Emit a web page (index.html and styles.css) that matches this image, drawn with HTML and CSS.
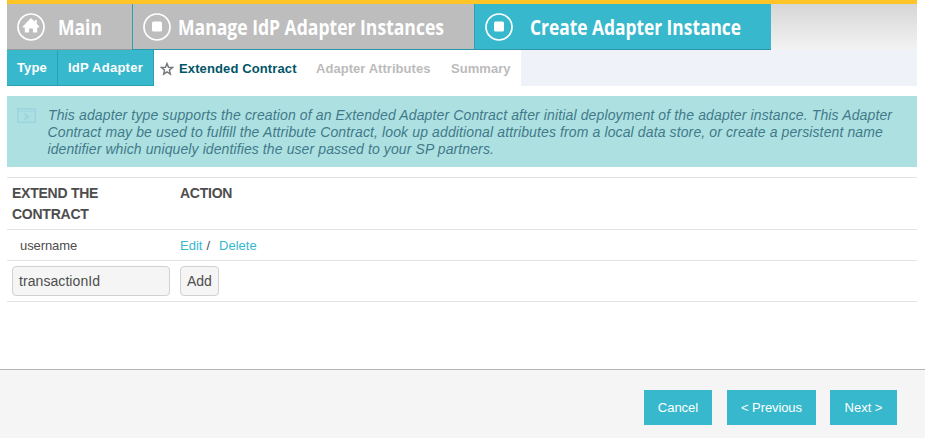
FILE: index.html
```
<!DOCTYPE html>
<html lang="en">
<head>
<meta charset="utf-8">
<title>Create Adapter Instance</title>
<link rel="stylesheet" href="styles.css">
</head>
<body>
<div class="page">
  <header class="crumbs">
    <div class="crumb crumb-main">
      <svg class="ring" viewBox="0 0 28 28"><circle cx="14" cy="14" r="13"/><path d="M14 5l3.8 3.8V7h2v3.8l2.4 2.7v1.1h-2V19.5h-4.3V15.5h-3.8V19.5H7.8v-4.9h-2v-1.1z"/></svg>
      <svg class="title" width="46" height="32"><text x="0" y="22.5" textLength="44" lengthAdjust="spacingAndGlyphs">Main</text></svg>
    </div>
    <div class="crumb crumb-manage">
      <svg class="ring" viewBox="0 0 28 28"><circle cx="14" cy="14" r="13"/><rect x="9" y="8.5" width="10" height="10" rx="1.5"/></svg>
      <svg class="title" width="270" height="32"><text x="0" y="22.5" textLength="266" lengthAdjust="spacingAndGlyphs">Manage IdP Adapter Instances</text></svg>
    </div>
    <div class="crumb crumb-create">
      <svg class="ring" viewBox="0 0 28 28"><circle cx="14" cy="14" r="13"/><rect x="9" y="8.5" width="10" height="10" rx="1.5"/></svg>
      <svg class="title" width="214" height="32"><text x="0" y="22.5" textLength="211" lengthAdjust="spacingAndGlyphs">Create Adapter Instance</text></svg>
    </div>
  </header>
  <nav class="tabs">
    <div class="tab tab-type">Type</div>
    <div class="tab tab-idp">IdP Adapter</div>
    <div class="steps">
      <svg class="star" viewBox="0 0 14 14"><path d="M7 1.5l1.5 3.8 4 .2-3.1 2.6 1 4L7 9.9l-3.4 2.2 1-4L1.5 5.5l4-.2z"/></svg>
      <span class="step current">Extended Contract</span>
      <span class="step attrs">Adapter Attributes</span>
      <span class="step summary">Summary</span>
    </div>
  </nav>
  <section class="notice">
    <svg class="notice-icon" viewBox="0 0 19 15"><path class="frame" d="M.8.8h17.4v13.4H.8z"/><path class="bar" d="M1 3.2h17"/><path class="chevron" d="M7 5.5l4.2 3.2L7 12"/></svg>
    <p><span class="l1">This adapter type supports the creation of an Extended Adapter Contract after initial deployment of the adapter instance. This Adapter</span><br><span class="l2">Contract may be used to fulfill the Attribute Contract, look up additional attributes from a local data store, or create a persistent name</span><br><span class="l3">identifier which uniquely identifies the user passed to your SP partners.</span></p>
  </section>
  <section class="grid">
    <div class="row head"><div class="c1">EXTEND THE<br>CONTRACT</div><div>ACTION</div></div>
    <div class="row data"><div class="c1">username</div><div class="links"><a>Edit</a><span>/</span><a>Delete</a></div></div>
    <div class="row entry"><div class="c1"><div class="field">transactionId</div></div><div class="add">Add</div></div>
  </section>
</div>
<footer class="footer">
  <div class="btn cancel">Cancel</div>
  <div class="btn prev">&lt; Previous</div>
  <div class="btn next">Next &gt;</div>
</footer>
</body>
</html>
```
FILE: styles.css
```
* { box-sizing: border-box; }
body { margin: 0; width: 925px; height: 438px; overflow: hidden; display: flex; flex-direction: column; background: #fff; color: #4d4d4d; font: 13px/16px "Liberation Sans", Arial, sans-serif; }
.page { width: 910px; height: 369px; margin-left: 7px; }
.crumbs { display: flex; height: 50px; border-top: 4px solid #ffc425; background: linear-gradient(#d6d6d6, #f3f3f4); }
.crumb { display: flex; align-items: flex-start; padding: 9px 0 0 10px; background: #bdbdbd; border-bottom: 1px solid #2996ab; }
.crumb-main { width: 125px; border-bottom-color: #999; }
.crumb-manage { width: 342px; border-left: 1px solid #2ba0b5; }
.crumb-create { width: 297px; background: #37b8cd; border-left: 1px solid #2ba0b5; }
.ring { width: 28px; height: 28px; flex: none; }
.ring circle { fill: none; stroke: #fff; stroke-width: 1.7; }
.ring path, .ring rect { fill: #fff; }
.title { margin: -1px 0 0 13px; flex: none; overflow: visible; fill: #fff; font: 700 20.5px "Open Sans", sans-serif; }
.crumb-manage .title { margin-left: 7px; }
.crumb-create .title { margin-left: 17px; }
.tabs { display: flex; height: 36px; background: #eff2f8; font-weight: bold; }
.tab { background: #37b8cd; color: #fff; padding: 10px 0 0 10px; border-right: 1px solid #2ba0b5; border-bottom: 1px solid #2ba0b5; letter-spacing: .25px; }
.tab-type { width: 51px; letter-spacing: .1px; }
.tab-idp { width: 96px; }
.steps { display: flex; width: 367px; padding: 11px 0 0 6px; background: #fff; color: #bbb; white-space: nowrap; }
.star { width: 14px; height: 14px; margin-top: 1px; fill: none; stroke: #75777b; stroke-width: 1.4; }
.step { flex: none; letter-spacing: .05px; }
.current { color: #005568; margin-left: 5px; width: 137px; letter-spacing: .12px; }
.attrs { width: 135px; }
.notice { display: flex; height: 71px; margin-top: 10px; padding: 12px 0 0 10px; background: #ade1e1; color: #42798a; font-size: 14px; line-height: 17px; font-style: italic; white-space: nowrap; }
.notice-icon { width: 19px; height: 15px; flex: none; fill: none; stroke: #9bd6e0; stroke-width: 1.5; }
.notice-icon .bar { stroke-width: 1; }
.notice-icon .chevron { stroke-width: 2.2; }
.notice p { margin: -1px 0 0 12px; }
.l1 { letter-spacing: .128px; }
.l2 { letter-spacing: .12px; }
.l3 { letter-spacing: .1px; }
.l2, .l3 { margin-left: -.5px; }
.grid { margin-top: 10px; border-top: 1px solid #e3e3e3; }
.row { display: flex; border-bottom: 1px solid #e3e3e3; padding-left: 5px; }
.c1 { width: 168px; flex: none; }
.head { height: 52px; padding-top: 5px; font-size: 14px; line-height: 21px; font-weight: bold; letter-spacing: -.25px; }
.data { height: 31px; padding-top: 8px; }
.data .c1 { padding-left: 8px; letter-spacing: -.1px; }
.links a { color: #37b8cd; }
.links span { margin: 0 9px 0 4px; }
.entry { height: 41px; padding-top: 5px; font-size: 14px; line-height: 28px; }
.field, .add { height: 30px; border: 1px solid #d1d1d1; border-radius: 4px; background: #f5f5f5; padding-left: 6px; }
.field { width: 158px; letter-spacing: .07px; }
.add { width: 39px; }
.footer { display: flex; justify-content: flex-end; height: 69px; padding: 20px 28px 0 0; border-top: 1px solid #b5b5b5; background: #f5f5f5; }
.btn { height: 35px; background: #37b8cd; color: #fff; line-height: 35px; text-align: center; }
.cancel { width: 68px; }
.prev { width: 89px; margin: 0 14px 0 15px; letter-spacing: -.1px; }
.next { width: 67px; }
```
